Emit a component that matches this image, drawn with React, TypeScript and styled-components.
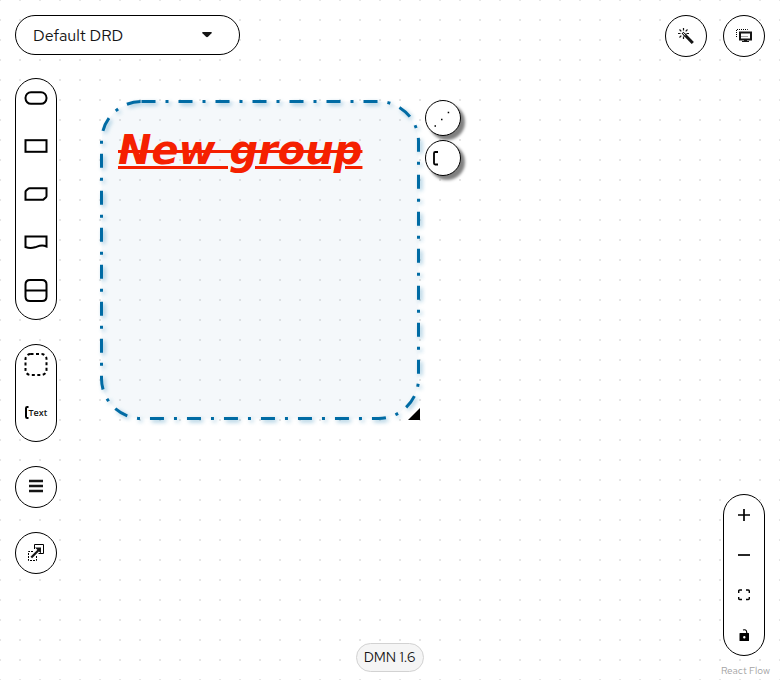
import React from "react";
import styled, { createGlobalStyle, css } from "styled-components";

const GlobalStyle = createGlobalStyle`
  * { box-sizing: border-box; }
  body {
    margin: 0;
    background: #fff;
    color: #151515;
    font-family: "Red Hat Text", Inter, "Liberation Sans", sans-serif;
    font-size: 16px;
  }
  button { font: inherit; color: inherit; cursor: pointer; }
`;

const Editor = styled.main`
  position: relative;
  display: flex;
  flex-direction: column;
  min-height: 100vh;
  padding: 15px 15px 0;
  background-image: radial-gradient(circle at center, #e6e6e6 1px, transparent 1px);
  background-size: 20px 20px;
  background-position: -10px -10px;
`;

const Header = styled.header`
  display: flex;
  justify-content: space-between;
  align-items: flex-start;
`;

const outlined = css`
  background: #fff;
  border: 1px solid #000;
  border-radius: 21px;
`;

const DrdToggle = styled.button`
  ${outlined}
  display: flex;
  align-items: center;
  justify-content: space-between;
  width: 225px;
  height: 40px;
  padding: 0 27px 0 17px;
`;

const HeaderActions = styled.div`
  display: flex;
  gap: 16px;
`;

const RoundButton = styled.button`
  ${outlined}
  display: flex;
  align-items: center;
  justify-content: center;
  width: 42px;
  height: 42px;
  padding: 0;
`;

const Body = styled.div`
  display: grid;
  grid-template-columns: 1fr auto 1fr;
  flex: 1;
`;

const LeftTools = styled.aside`
  display: flex;
  flex-direction: column;
  gap: 24px;
  width: 42px;
  padding-top: 21px;
`;

const Palette = styled.div`
  ${outlined}
  display: flex;
  flex-direction: column;
`;

const PaletteItem = styled.button`
  display: flex;
  align-items: center;
  justify-content: center;
  height: 48px;
  padding: 0 0 10px;
  border: 0;
  background: none;
`;

const ControlItem = styled.button`
  display: flex;
  align-items: center;
  justify-content: center;
  width: 40px;
  height: 40px;
  padding: 0;
  border: 0;
  background: none;
`;

const RightTools = styled.aside`
  display: flex;
  flex-direction: column;
  align-items: flex-end;
  justify-content: flex-end;
`;

const Attribution = styled.a`
  height: 24px;
  margin-right: -5px;
  padding-top: 8px;
  color: #a3a3a3;
  font-size: 10px;
  line-height: 14px;
  text-decoration: none;
`;

const VersionBadge = styled.span`
  align-self: end;
  margin-bottom: 8px;
  padding: 0 8px 0 7px;
  border: 1px solid #d2d2d2;
  border-radius: 15px;
  background: #f5f5f5;
  font-size: 14px;
  line-height: 27px;
`;

const GroupNode = styled.section`
  position: absolute;
  left: 100px;
  top: 100px;
  width: 320px;
  height: 320px;
`;

const GroupShape = styled.svg`
  position: absolute;
  inset: 0;
  overflow: visible;
`;

const GroupOutline = styled.rect`
  fill: rgba(0, 107, 164, 0.033);
  stroke: #006ba4;
  stroke-width: 3;
  stroke-dasharray: 14 10 3 10;
  filter: drop-shadow(2px 2px 2px rgba(0, 107, 164, 0.4));
`;

const GroupName = styled.span`
  position: relative;
  display: block;
  padding: 27px 18px;
  color: #f52000;
  font: italic bold 40px/47px "DejaVu Sans", sans-serif;
  text-decoration: underline line-through;
  text-decoration-thickness: 3px;
  white-space: nowrap;
`;

const NodeActions = styled.div`
  position: absolute;
  left: 100%;
  top: 0;
  display: flex;
  flex-direction: column;
  gap: 4px;
  padding-left: 5px;
`;

const NodeAction = styled.button`
  width: 36px;
  height: 36px;
  padding: 0;
  border: 1px solid #000;
  border-radius: 50%;
  background: #fff;
  box-shadow: 4px 4px 3px 0 rgba(0, 0, 0, 0.5);
`;

const ResizeHandle = styled.span`
  position: absolute;
  right: 0;
  bottom: 0;
  width: 12px;
  height: 12px;
  background: #000;
  clip-path: polygon(100% 0, 100% 100%, 0 100%);
`;

const ShapeLabel = styled.text`
  fill: #151515;
  stroke: none;
  font: 600 9px "Open Sans", sans-serif;
`;

type IconProps = { size: number; children: React.ReactNode };

const Icon = ({ size, children }: IconProps) => (
  <svg width={size} height={size} viewBox={`0 0 ${size} ${size}`} fill="none" stroke="#000" aria-hidden="true">
    {children}
  </svg>
);

const paletteShapes = [
  { label: "Input data", art: <rect x="3.500" y="8.300" width="21" height="11.500" rx="5.500" strokeWidth="2" /> },
  { label: "Decision", art: <rect x="3.500" y="8.200" width="21" height="11.600" strokeWidth="2" /> },
  {
    label: "Business knowledge model",
    art: <path d="M3.500 19.800V12Q3.500 11.300 4 10.800L6.200 8.800Q6.800 8.200 7.700 8.200H24.500V16Q24.500 16.700 24 17.200L21.800 19.200Q21.200 19.800 20.300 19.800Z" strokeWidth="2" />,
  },
  {
    label: "Knowledge source",
    art: <path d="M3.500 8.500H24.500V18.500C19 16 16 18.500 13 19.300C9 20.500 6 20 3.500 19Z" strokeWidth="2" />,
  },
  {
    label: "Decision service",
    art: <path d="M8 4H20Q24.500 4 24.500 8.500V20.500Q24.500 25 20 25H8Q3.500 25 3.500 20.500V8.500Q3.500 4 8 4ZM3.500 14.500H24.500" strokeWidth="2" />,
  },
];

export default function App() {
  return (
    <>
      <GlobalStyle />
      <Editor>
        <GroupNode aria-label="New group">
          <GroupShape width="320" height="320">
            <GroupOutline x="1.5" y="1.5" width="317" height="317" rx="40" />
          </GroupShape>
          <GroupName>New group</GroupName>
          <NodeActions>
            <NodeAction aria-label="Add association">
              <Icon size={34}>
                <path d="M8.500 25H10M15 18.500H16.500M21.700 11.500H23.200" strokeWidth="1.500" />
              </Icon>
            </NodeAction>
            <NodeAction aria-label="Add text annotation">
              <Icon size={34}>
                <path d="M12 11H9.200Q8 11 8 12.200V22.300Q8 23.500 9.200 23.500H12" strokeWidth="1.800" />
              </Icon>
            </NodeAction>
          </NodeActions>
          <ResizeHandle />
        </GroupNode>

        <Header>
          <DrdToggle aria-haspopup="listbox">
            Default DRD
            <svg width="10" height="6" viewBox="0 0 10 6" aria-hidden="true">
              <path d="M0.800 0H9.200Q10.300 0.300 9.500 1.200L6 4.800Q5 5.600 4 4.800L0.500 1.200Q-0.300 0.300 0.800 0Z" fill="#151515" />
            </svg>
          </DrdToggle>
          <HeaderActions>
            <RoundButton aria-label="Autolayout">
              <Icon size={16}>
                <path d="M6.500 6.500L14.800 15" stroke="#151515" strokeWidth="3" />
                <path d="M4.500 4.600L8 8.100" stroke="#151515" strokeWidth="2.500" />
                <path d="M4.900 5L7.300 7.400" stroke="#fff" strokeWidth="1" />
                <path d="M5.500 0V2.500M1.500 1.500L3.300 3.300M0 5.500H2.500M1.500 9.500L3.300 7.700M5.500 8.500V11M9.500 1.500L7.700 3.300M8.500 5.500H11" stroke="#151515" strokeWidth="1.200" />
              </Icon>
            </RoundButton>
            <RoundButton aria-label="Overlays">
              <Icon size={16}>
                <path d="M0.500 9V1.500H11.500V3" strokeDasharray="1 1" />
                <rect x="4" y="4.500" width="11" height="7" stroke="#151515" strokeWidth="2" />
                <path d="M5.500 8.500H12" stroke="#555" strokeDasharray="1 1" />
                <path d="M8 12H11V13H13V14H6V13H8Z" fill="#151515" stroke="none" />
              </Icon>
            </RoundButton>
          </HeaderActions>
        </Header>

        <Body>
          <LeftTools>
            <Palette>
              {paletteShapes.map(({ label, art }) => (
                <PaletteItem key={label} aria-label={label}>
                  <Icon size={28}>{art}</Icon>
                </PaletteItem>
              ))}
            </Palette>
            <Palette>
              <PaletteItem aria-label="Group">
                <Icon size={28}>
                  <rect x="3.500" y="4" width="21" height="21" rx="5" strokeWidth="2" strokeDasharray="3 2.500" />
                </Icon>
              </PaletteItem>
              <PaletteItem aria-label="Text annotation">
                <Icon size={28}>
                  <path d="M6.500 9H5.200Q4 9 4 10.200V18.800Q4 20 5.200 20H6.500" strokeWidth="2" />
                  <ShapeLabel x="6.500" y="18">Text</ShapeLabel>
                </Icon>
              </PaletteItem>
            </Palette>
            <RoundButton aria-label="Data types">
              <Icon size={16}>
                <path d="M1 2H15M1 7H15M1 12H15" stroke="#151515" strokeWidth="2.300" />
              </Icon>
            </RoundButton>
            <RoundButton aria-label="External nodes">
              <Icon size={18}>
                <path d="M7.500 5V0.500H16.500V9.500H11.500" />
                <path d="M6 7.500H1.500V16.500H9.500V11" strokeDasharray="2 1" />
                <path d="M4.300 13.500L11.500 6.300" stroke="#151515" strokeWidth="2.200" />
                <path d="M8 3.500H14V9.500Z" fill="#151515" stroke="none" />
              </Icon>
            </RoundButton>
          </LeftTools>

          <VersionBadge>DMN 1.6</VersionBadge>

          <RightTools>
            <Palette>
              <ControlItem aria-label="Zoom in">
                <Icon size={12}><path d="M6 0V12M0 6H12" strokeWidth="1.700" /></Icon>
              </ControlItem>
              <ControlItem aria-label="Zoom out">
                <Icon size={12}><path d="M0 6H12" strokeWidth="1.700" /></Icon>
              </ControlItem>
              <ControlItem aria-label="Fit view">
                <Icon size={12}>
                  <path d="M0.700 4V2Q0.700 1 1.700 1H4M8 1H10.300Q11.300 1 11.300 2V4M11.300 8V9.500Q11.300 10.500 10.300 10.500H8M4 10.500H1.700Q0.700 10.500 0.700 9.500V8" strokeWidth="1.400" />
                </Icon>
              </ControlItem>
              <ControlItem aria-label="Toggle interactivity">
                <Icon size={12}>
                  <path fillRule="evenodd" d="M2 4H10.500Q11 4 11 4.500V11.500Q11 12 10.500 12H2Q1.500 12 1.500 11.500V4.500Q1.500 4 2 4ZM6.300 7A1.200 1.200 0 1 0 6.300 9.400A1.200 1.200 0 1 0 6.300 7Z" fill="#000" stroke="none" />
                  <path d="M5 1Q8.300 0 8.700 3V4.500" strokeWidth="1.200" />
                </Icon>
              </ControlItem>
            </Palette>
            <Attribution href="#react-flow">React Flow</Attribution>
          </RightTools>
        </Body>
      </Editor>
    </>
  );
}
